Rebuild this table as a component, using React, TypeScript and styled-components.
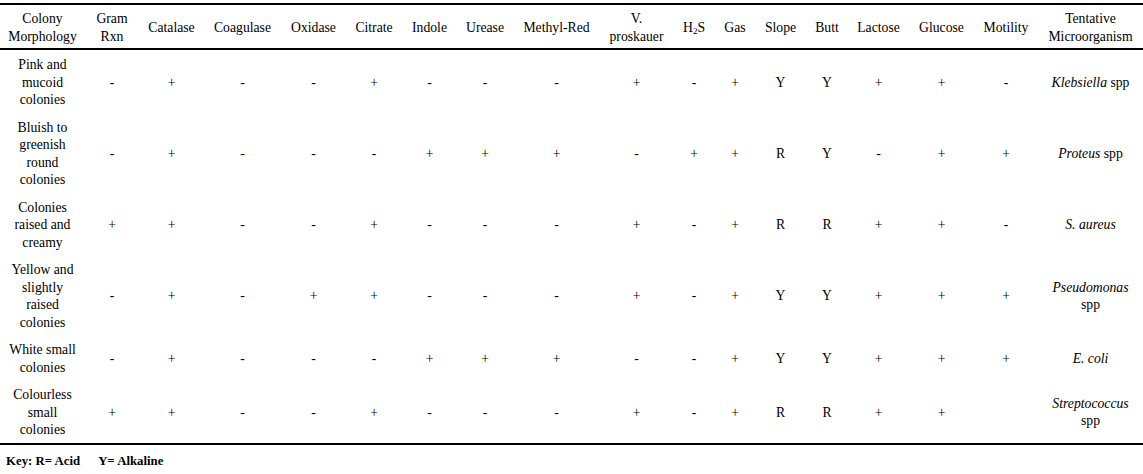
import React from "react";
import styled, { createGlobalStyle } from "styled-components";

const GlobalStyle = createGlobalStyle`
  html, body {
    margin: 0;
    padding: 0;
    background: #ffffff;
  }
  body {
    font-family: "Liberation Serif", "Times New Roman", serif;
    color: #000000;
  }
`;

const Page = styled.div`
  width: 1143px;
  padding-top: 3px;
`;

const Table = styled.table`
  width: 1143px;
  border-collapse: separate;
  border-spacing: 0;
  table-layout: fixed;
  font-size: 13.7px;
  line-height: 17.5px;
`;

const HeadCell = styled.th`
  font-weight: normal;
  text-align: center;
  vertical-align: middle;
  padding: 5px 5px 3px;
  border-top: 2px solid #000;
  border-bottom: 2px solid #000;
`;

const Cell = styled.td<{ $last?: boolean }>`
  text-align: center;
  vertical-align: middle;
  padding: 6px 5px 4px;
  border-bottom: ${(p) => (p.$last ? "2px solid #000" : "0")};
`;

const Species = styled.i`
  font-style: italic;
`;

const Sub = styled.sub`
  font-size: 9px;
  line-height: 0;
  vertical-align: -2px;
`;

const Key = styled.div`
  display: flex;
  gap: 18px;
  margin-top: 8px;
  padding-left: 6px;
  font-size: 12.8px;
  font-weight: bold;
  line-height: 16px;
`;

const widths = [85, 54, 65, 77, 65, 56, 55, 56, 87, 73, 42, 40, 51, 42, 61, 65, 64, 105];

const headers: React.ReactNode[] = [
  "Colony Morphology",
  "Gram Rxn",
  "Catalase",
  "Coagulase",
  "Oxidase",
  "Citrate",
  "Indole",
  "Urease",
  "Methyl-Red",
  "V. proskauer",
  <>
    H<Sub>2</Sub>S
  </>,
  "Gas",
  "Slope",
  "Butt",
  "Lactose",
  "Glucose",
  "Motility",
  "Tentative Microorganism",
];

type Row = { morph: string; vals: string[]; organism: React.ReactNode };

const rows: Row[] = [
  {
    morph: "Pink and mucoid colonies",
    vals: ["-", "+", "-", "-", "+", "-", "-", "-", "+", "-", "+", "Y", "Y", "+", "+", "-"],
    organism: (
      <>
        <Species>Klebsiella</Species> spp
      </>
    ),
  },
  {
    morph: "Bluish to greenish round colonies",
    vals: ["-", "+", "-", "-", "-", "+", "+", "+", "-", "+", "+", "R", "Y", "-", "+", "+"],
    organism: (
      <>
        <Species>Proteus</Species> spp
      </>
    ),
  },
  {
    morph: "Colonies raised and creamy",
    vals: ["+", "+", "-", "-", "+", "-", "-", "-", "+", "-", "+", "R", "R", "+", "+", "-"],
    organism: <Species>S. aureus</Species>,
  },
  {
    morph: "Yellow and slightly raised colonies",
    vals: ["-", "+", "-", "+", "+", "-", "-", "-", "+", "-", "+", "Y", "Y", "+", "+", "+"],
    organism: (
      <>
        <Species>Pseudomonas</Species> spp
      </>
    ),
  },
  {
    morph: "White small colonies",
    vals: ["-", "+", "-", "-", "-", "+", "+", "+", "-", "-", "+", "Y", "Y", "+", "+", "+"],
    organism: <Species>E. coli</Species>,
  },
  {
    morph: "Colourless small colonies",
    vals: ["+", "+", "-", "-", "+", "-", "-", "-", "+", "-", "+", "R", "R", "+", "+", ""],
    organism: (
      <>
        <Species>Streptococcus</Species> spp
      </>
    ),
  },
];

export default function App() {
  return (
    <Page>
      <GlobalStyle />
      <Table>
        <colgroup>
          {widths.map((w, i) => (
            <col key={i} style={{ width: w }} />
          ))}
        </colgroup>
        <thead>
          <tr>
            {headers.map((h, i) => (
              <HeadCell key={i}>{h}</HeadCell>
            ))}
          </tr>
        </thead>
        <tbody>
          {rows.map((r, ri) => {
            const last = ri === rows.length - 1;
            return (
              <tr key={ri}>
                <Cell $last={last}>{r.morph}</Cell>
                {r.vals.map((v, vi) => (
                  <Cell key={vi} $last={last}>
                    {v}
                  </Cell>
                ))}
                <Cell $last={last}>{r.organism}</Cell>
              </tr>
            );
          })}
        </tbody>
      </Table>
      <Key>
        <span>Key: R= Acid</span>
        <span>Y= Alkaline</span>
      </Key>
    </Page>
  );
}
